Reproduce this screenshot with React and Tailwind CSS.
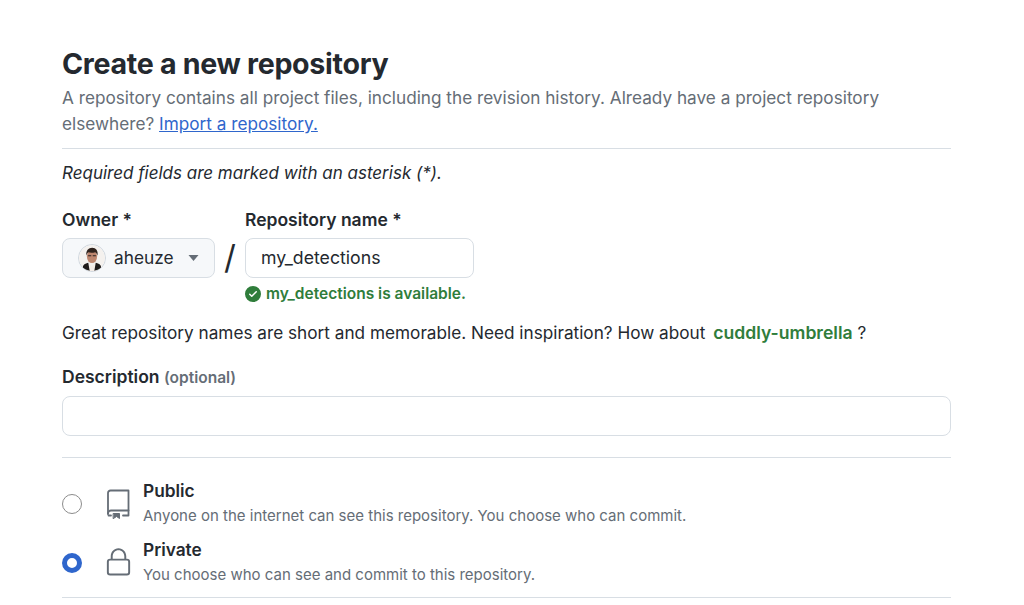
const Avatar = () => (
  <svg viewBox="0 0 28 28" className="w-[28px] h-[28px] rounded-full border border-[#d0d7de]">
    <circle cx="14" cy="14" r="14" fill="#f4f1ee" />
    <path d="M3 28c0-5 1-7 7-8l4 3 4-3c6 1 7 3 7 8z" fill="#f3ece6" />
    <path d="M4 26c0-4 1-6 6-7l1.500 9zM24 26c0-4-1-6-6-7l-1.500 9z" fill="#1f1b1a" />
    <ellipse cx="14" cy="12.500" rx="5.500" ry="7" fill="#bd866e" />
    <path d="M8 11.500c-.8-5.500 2.200-8.500 6.200-8.500s6.600 3 5.800 8.500c-.6-2.200-1.500-3.400-2.600-3.800-2.200.8-5.400.8-7.200.2-1 .6-1.800 1.800-2.200 3.600z" fill="#2e221c" />
    <path d="M9.800 11.500h3.400M14.800 11.500h3.400" stroke="#2b2320" strokeWidth="1.100" />
  </svg>
);

const RepoIcon = () => (
  <svg viewBox="0 0 24 30" className="w-[24px] h-[30px]" fill="none" stroke="#656d76" strokeWidth="1.800" strokeLinecap="round" strokeLinejoin="round">
    <path d="M2 25V4a2.500 2.500 0 0 1 2.500-2.500H22.500V26.500H17" />
    <path d="M2 24.500a3 3 0 0 1 3-3H22.500" />
    <path d="M2.500 26.500H5" />
    <path d="M7.500 24.500h6v5l-3-2-3 2z" fill="#656d76" strokeWidth="1" />
  </svg>
);

const LockIcon = () => (
  <svg viewBox="0 0 24 24" className="w-[31px] h-[31px]" fill="#656d76">
    <path d="M6 9V7.250C6 3.845 8.503 1 12 1s6 2.845 6 6.250V9h.5a2.500 2.500 0 0 1 2.500 2.500v8a2.500 2.500 0 0 1-2.500 2.500h-13A2.500 2.500 0 0 1 3 19.500v-8A2.500 2.500 0 0 1 5.500 9Zm-1.500 2.500v8a1 1 0 0 0 1 1h13a1 1 0 0 0 1-1v-8a1 1 0 0 0-1-1h-13a1 1 0 0 0-1 1Zm3-4.250V9h9V7.250c0-2.670-1.922-4.750-4.500-4.750-2.578 0-4.500 2.080-4.500 4.750Z" />
  </svg>
);

const CheckIcon = () => (
  <svg viewBox="0 0 16 16" className="w-[16px] h-[16px]" fill="#2f7d3b">
    <path d="M8 16A8 8 0 1 1 8 0a8 8 0 0 1 0 16Zm3.780-9.720a.751.751 0 0 0-.018-1.042.751.751 0 0 0-1.042-.018L6.750 9.190 5.280 7.720a.751.751 0 0 0-1.042.018.751.751 0 0 0-.018 1.042l2 2a.75.75 0 0 0 1.060 0Z" />
  </svg>
);

const VisibilityRow = ({ title, text, icon, checked }) => (
  <div className="flex items-center h-[59px]">
    {checked ? (
      <div className="w-[20px] h-[20px] rounded-full border-[5px] border-[#2f66cc] bg-white shrink-0" />
    ) : (
      <div className="w-[20px] h-[20px] rounded-full border border-[#8c8c8c] bg-white shrink-0" />
    )}
    <div className="w-[61px] pl-[11px] flex justify-center shrink-0">{icon}</div>
    <div>
      <div className="text-[17.3px] leading-[25px] font-semibold text-[#24292f] -translate-y-px">{title}</div>
      <div className="text-[15px] leading-[24px] text-[#656d76]">{text}</div>
    </div>
  </div>
);

export default function App() {
  return (
    <div className="h-[605px] w-[1024px] overflow-hidden bg-white pl-[62px] pr-[73px] pt-[46px] font-['Inter','Liberation_Sans',sans-serif] text-[#24292f]">
      <h1 className="text-[28.6px] leading-[36px] font-bold tracking-[-0.3px]">Create a new repository</h1>
      <p className="mt-[3px] text-[17.2px] leading-[26px] text-[#656d76]">
        A repository contains all project files, including the revision history. Already have a project repository
        elsewhere? <a className="text-[#2f66cc] underline">Import a repository.</a>
      </p>
      <div className="mt-[11px] border-t border-[#d8dee4]" />
      <p className="mt-[12px] text-[17px] leading-[24px] italic">Required fields are marked with an asterisk (*).</p>

      <div className="mt-[23px] flex items-start">
        <div>
          <div className="text-[17.5px] leading-[24px] font-semibold">Owner *</div>
          <div className="mt-[6px] w-[153px] h-[40px] flex items-center pl-[15px] rounded-[8px] border border-[#d8dee4] bg-[#f6f8fa]">
            <Avatar />
            <span className="ml-[8px] text-[17.3px]">aheuze</span>
            <svg viewBox="0 0 10 6" className="ml-[14px] w-[11px] h-[6px]" fill="#656d76">
              <path d="M0 0h10L5 6z" />
            </svg>
          </div>
        </div>
        <div className="w-[30px] mt-[30px] h-[40px] flex items-center justify-center text-[33px] text-[#24292f]">/</div>
        <div>
          <div className="text-[17.5px] leading-[24px] font-semibold">Repository name *</div>
          <div className="mt-[6px] w-[229px] h-[40px] flex items-center pl-[15px] rounded-[8px] border border-[#d8dee4] bg-white text-[17.7px]">
            my_detections
          </div>
          <div className="mt-[6px] flex items-center gap-[5px] text-[15.5px] leading-[20px] font-semibold text-[#2f7d3b]">
            <CheckIcon />
            my_detections is available.
          </div>
        </div>
      </div>

      <p className="mt-[17px] text-[17.2px] leading-[24px]">
        Great repository names are short and memorable. Need inspiration? How about{" "}
        <span className="font-semibold text-[17.6px] text-[#2f7d3b] ml-[3px]">cuddly-umbrella</span> ?
      </p>

      <div className="mt-[20px] text-[17.5px] leading-[24px] font-semibold">
        Description <span className="text-[15.5px] text-[#656d76]">(optional)</span>
      </div>
      <div className="mt-[6px] h-[40px] rounded-[8px] border border-[#d8dee4] bg-white" />
      <div className="mt-[21px] border-t border-[#d8dee4]" />

      <div className="mt-[16px]">
        <VisibilityRow
          title="Public"
          text="Anyone on the internet can see this repository. You choose who can commit."
          icon={<RepoIcon />}
        />
        <VisibilityRow
          title="Private"
          text="You choose who can see and commit to this repository."
          icon={<LockIcon />}
          checked
        />
      </div>
      <div className="mt-[5px] border-t border-[#d8dee4]" />
    </div>
  );
}
